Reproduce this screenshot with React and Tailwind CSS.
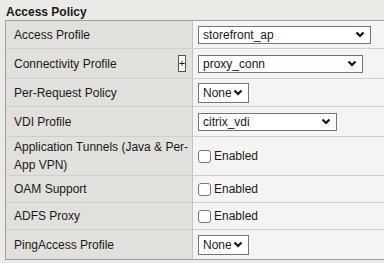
import React from "react";

function Chevron() {
  return (
    <svg width="10" height="7" viewBox="0 0 10 7" className="shrink-0">
      <polyline points="1.5,1.5 5,5 8.5,1.5" fill="none" stroke="#111" strokeWidth="2.2" />
    </svg>
  );
}

function Select({ value, width, tall }) {
  return (
    <div
      className={`flex items-center justify-between bg-white border border-[#767676] pl-[4px] pr-[5px] ${tall ? "h-[20px]" : "h-[18px]"}`}
      style={{ width }}
    >
      <span className="leading-none">{value}</span>
      <Chevron />
    </div>
  );
}

function Check() {
  return (
    <div className="flex items-center gap-[3px]">
      <span className="w-[13px] h-[13px] rounded-[3px] border border-[#767676] bg-white" />
      <span>Enabled</span>
    </div>
  );
}

function Row({ label, h, children, extra, last }) {
  return (
    <div className={`grid grid-cols-[187px_1fr] ${last ? "" : "border-b border-[#cfceca]"}`}>
      <div className={`flex items-center justify-between bg-[#e1e0dc] pl-[8px] pr-[6px] border-r border-[#c4c3bf] ${h}`}>
        <span className="leading-[18px] whitespace-nowrap">{label}</span>
        {extra}
      </div>
      <div className={`flex items-center bg-[#f5f4f2] pl-[5px] ${h}`}>{children}</div>
    </div>
  );
}

export default function App() {
  return (
    <div
      className="w-[384px] h-[263px] overflow-hidden bg-[#ebeae6] text-[12px] text-[#1a1a1a]"
      style={{ fontFamily: '"Liberation Sans", Arial, sans-serif' }}
    >
      <div className="pl-[6px] pt-[3px] h-[20px] font-bold text-[12px]">Access Policy</div>
      <div className="ml-[5px] w-[400px] border-t border-l border-b border-[#9f9e9b]">
        <Row label="Access Profile" h="h-[27px]">
          <Select value="storefront_ap" width={173} />
        </Row>
        <Row
          label="Connectivity Profile"
          h="h-[29px]"
          extra={
            <span className="flex items-center justify-center w-[8px] h-[17px] border border-[#555] bg-white text-[11px] leading-none">+</span>
          }
        >
          <Select value="proxy_conn" width={165} />
        </Row>
        <Row label="Per-Request Policy" h="h-[27px]">
          <Select value="None" width={51} tall />
        </Row>
        <Row label="VDI Profile" h="h-[29px]">
          <Select value="citrix_vdi" width={139} />
        </Row>
        <Row
          label={
            <>
              Application Tunnels (Java &amp; Per-
              <br />
              App VPN)
            </>
          }
          h="h-[38px]"
        >
          <Check />
        </Row>
        <Row label="OAM Support" h="h-[26px]">
          <Check />
        </Row>
        <Row label="ADFS Proxy" h="h-[26px]">
          <Check />
        </Row>
        <Row label="PingAccess Profile" h="h-[29px]" last>
          <Select value="None" width={51} tall />
        </Row>
      </div>
    </div>
  );
}
